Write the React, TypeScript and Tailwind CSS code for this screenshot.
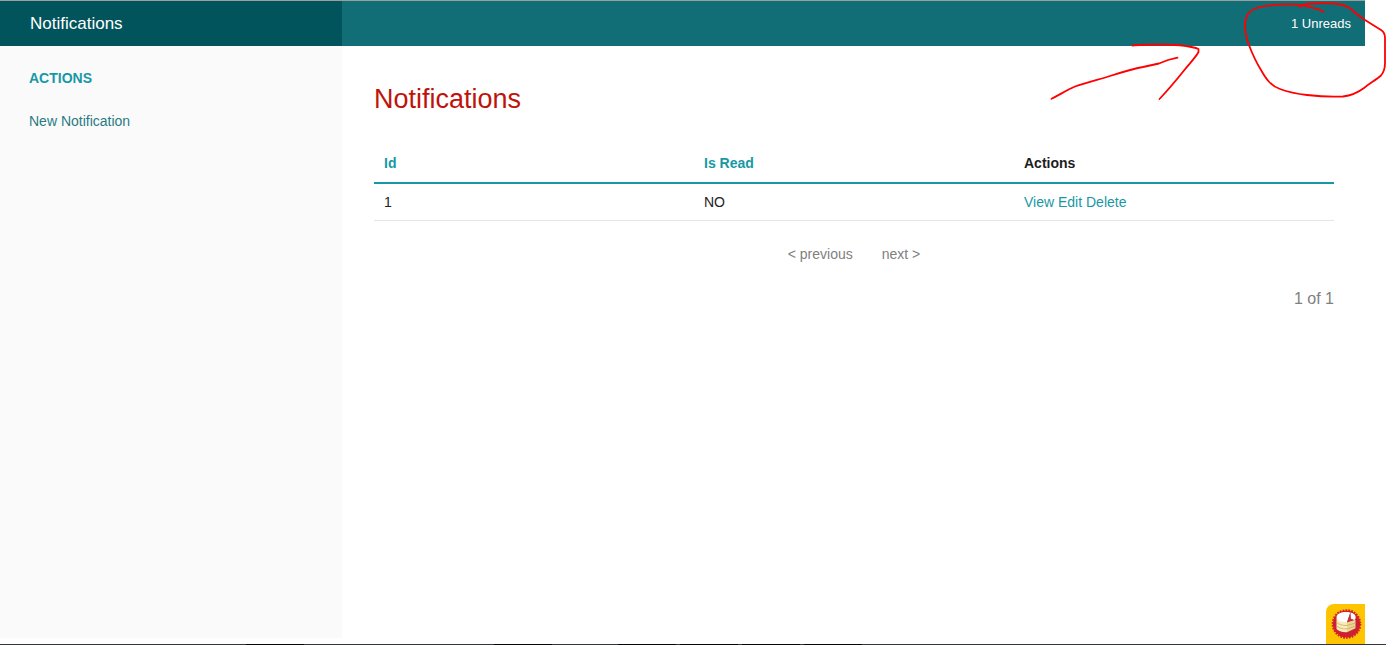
const columns = [
  { label: "Id", sortable: true },
  { label: "Is Read", sortable: true },
  { label: "Actions", sortable: false },
];

const rows = [{ id: 1, isRead: "NO" }];

function TopBar() {
  return (
    <nav className="mr-[21px] flex h-[46px] items-center border-t border-[#9a9f9f] bg-[#116d76] text-white">
      <div className="flex h-full w-[342px] items-center bg-[#01545b] px-[30px]">
        <a href="#notifications" className="text-[17px] leading-6">
          Notifications
        </a>
      </div>
      <div className="flex flex-1 justify-end px-[14px]">
        <a href="#unread" className="text-[13px] leading-5">
          1 Unreads
        </a>
      </div>
    </nav>
  );
}

function Sidebar() {
  return (
    <aside className="mb-[6px] w-[342px] bg-[#fafafa] px-[29px] pt-[22px]">
      <h2 className="text-sm font-bold text-[#1798a5] uppercase">Actions</h2>
      <a href="#new" className="mt-[23px] block text-sm text-[#2a7a85]">
        New Notification
      </a>
    </aside>
  );
}

function NotificationTable() {
  return (
    <table className="w-full table-fixed border-collapse text-left text-sm">
      <thead>
        <tr className="border-b-2 border-[#1798a5]">
          {columns.map((column) => (
            <th key={column.label} scope="col" className="px-[10px] pt-2 pb-[9px] font-bold text-[#1d1d1d]">
              {column.sortable ? (
                <a href="#sort" className="text-[#1798a5]">
                  {column.label}
                </a>
              ) : (
                column.label
              )}
            </th>
          ))}
        </tr>
      </thead>
      <tbody>
        {rows.map((row) => (
          <tr key={row.id} className="border-b border-[#e6e6e6] text-[#222222]">
            <td className="px-[10px] py-2">{row.id}</td>
            <td className="px-[10px] py-2">{row.isRead}</td>
            <td className="px-[10px] py-2 text-[#1798a5]">
              <a href="#view">View</a> <a href="#edit">Edit</a> <a href="#delete">Delete</a>
            </td>
          </tr>
        ))}
      </tbody>
    </table>
  );
}

function Pager() {
  return (
    <div className="text-[#808080]">
      <div className="mt-[23px] flex justify-center gap-[29px] text-sm">
        <a href="#previous">&lt; previous</a>
        <a href="#next">next &gt;</a>
      </div>
      <p className="mt-[23px] text-right text-base">1 of 1</p>
    </div>
  );
}

function CakeIcon() {
  return (
    <svg viewBox="0 0 40 40" className="h-10 w-10" aria-hidden="true">
      <circle cx="20.5" cy="20" r="13.6" fill="#cf1f30" />
      <circle cx="20.5" cy="20" r="14" fill="none" stroke="#cf1f30" strokeWidth="1.6" strokeDasharray="1.8 1.13" />
      <path d="M10.500 14v11c1.600 2.200 5.500 3.400 10.500 3.200v-10z" fill="#f7ebb9" />
      <path d="M21 18.200 29.500 15.800v8.400L21 28.200z" fill="#e9d794" />
      <path d="M10.500 18.300c2 2 5.500 3.300 10.500 3.200l8.500-2.500M10.500 21.800c2 2 5.500 3.300 10.500 3.200l8.500-3" fill="none" stroke="#c7a35a" strokeWidth=".7" />
      <path d="M10.500 13c0-3 4.300-5 9.700-5 1.500 0 2.800.1 4 .4L21 18.200c-6 0-10.500-2-10.500-5.200z" fill="#fff" />
      <path d="M24.500 8.500c3.200.8 5.200 2.500 5.200 4.700 0 1.200-.5 2.100-1.500 3l-3.700-1.600z" fill="#fff" />
      <path d="m24.300 9.500.5 5.200 3 1.400L21 18.200z" fill="#c5303a" />
    </svg>
  );
}

function Annotation() {
  return (
    <svg
      viewBox="0 0 346 110"
      className="pointer-events-none absolute top-0 right-0 h-[110px] w-[346px]"
      fill="none"
      stroke="#ff0000"
      strokeWidth="1.8"
      strokeLinecap="round"
      strokeLinejoin="round"
      aria-hidden="true"
    >
      <path d="M11.500 98.800C20 94.500 27 90 35 86.500C47 82 59 79.500 70 76C81 72.500 92 69 103 67L119 63.500L128 60L137.500 57.700" />
      <path d="M92.500 45.500C99 44.500 110 44.500 122 44.500C139 44.800 150 45.500 158.500 49V52C156 57 150 63 144 70.500C136 80.500 128 90 119.500 99" />
      <path d="M283.500 11.700C281 9.500 277 9 272 7.500C266 5.500 257 4.300 248 4.300C238 4.300 228 5 218 7.500C210 10 205.500 15 205 23C205 31 206 38 208.500 44C212 53 216 62 221 70C226 79 231 86 240 89C248 92 258 94 267 95C278 96.300 292 97 303 96.500C312 95.500 318 92.500 324 88C330 83 336 80 341 75.500C344 72 345 68 345 63V38C345 34 343.500 31.500 341 30L325 20C319 16 315 13 312 10C308 6 304 5 298 4C290 3 280 3 272 3.500C267 4 262 5 259.500 6.800" />
    </svg>
  );
}

function BottomStrip() {
  return (
    <div className="grid h-px grid-cols-[246fr_58fr_190fr_58fr_66fr_58fr_4fr_58fr_4fr_58fr_4fr_58fr_524fr] bg-[#303547]" aria-hidden="true">
      {Array.from({ length: 13 }, (_, i) => (
        <span key={i} className={i % 2 ? "bg-[#090506]" : "bg-[#303547]"} />
      ))}
    </div>
  );
}

export default function App() {
  return (
    <div className="relative flex min-h-screen flex-col bg-white font-['Liberation_Sans',Arial,sans-serif]">
      <TopBar />
      <div className="mr-[21px] flex flex-1">
        <Sidebar />
        <main className="flex-1 pt-[35px] pr-[31px] pl-8">
          <h1 className="mb-7 text-[27px] leading-9 text-[#be140b]">Notifications</h1>
          <NotificationTable />
          <Pager />
        </main>
      </div>
      <button
        type="button"
        aria-label="Debug toolbar"
        className="absolute right-[21px] bottom-px h-10 w-[39px] overflow-hidden rounded-tl-lg bg-[#ffc400]"
      >
        <CakeIcon />
      </button>
      <BottomStrip />
      <Annotation />
    </div>
  );
}
